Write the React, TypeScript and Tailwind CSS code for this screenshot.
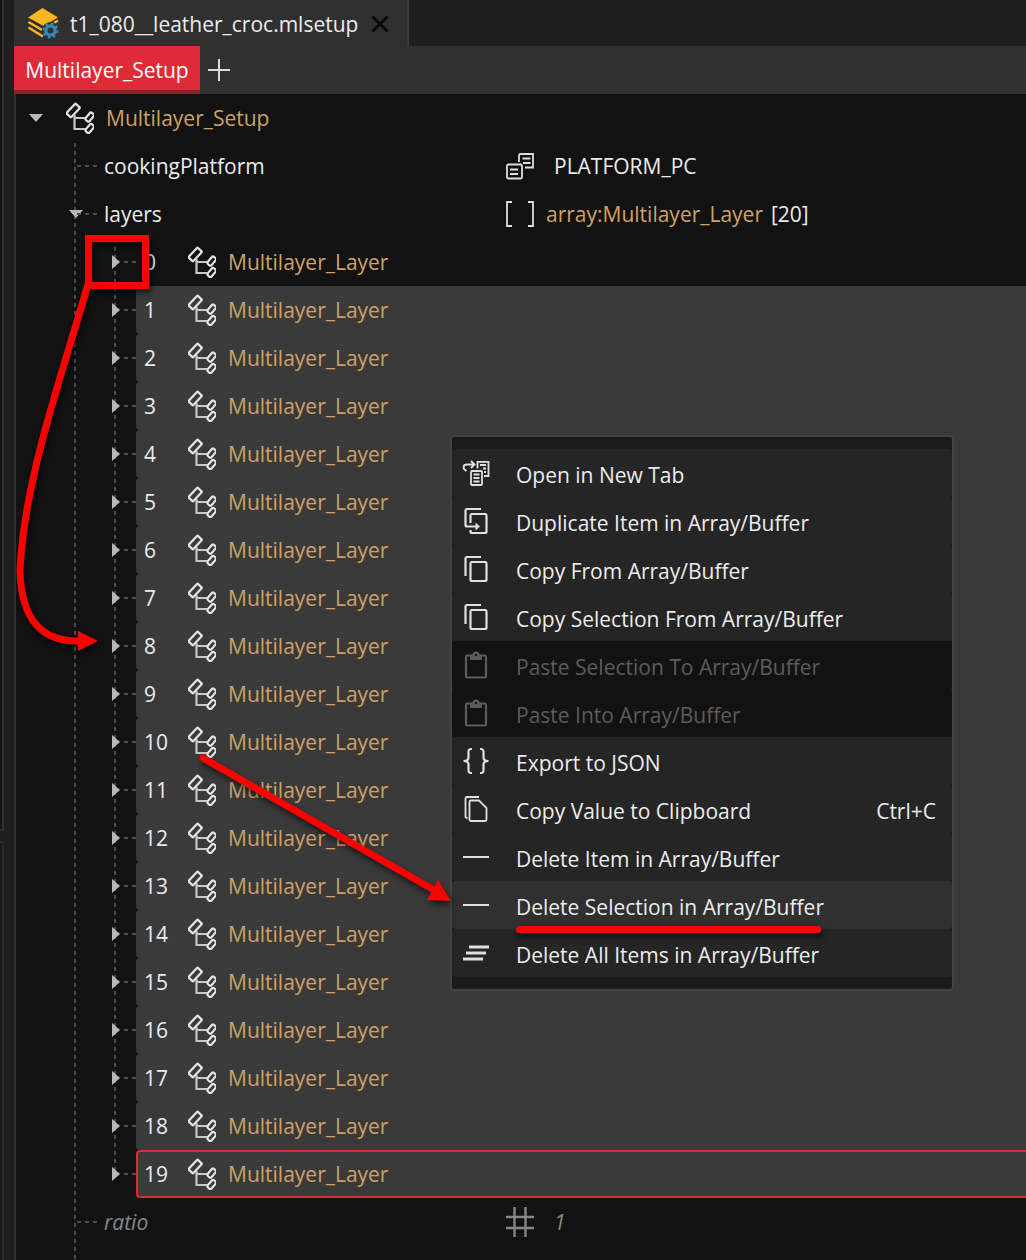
import React from 'react';

type IconProps = { className?: string };

const StructIcon = ({ className = '' }: IconProps) => (
  <svg className={`h-8 w-7 shrink-0 ${className}`} viewBox="0 0 28 32" fill="none" stroke="#e4e4e4" strokeWidth="2.2" aria-hidden="true">
    <rect x="0.5" y="5.3" width="13.4" height="6.4" rx="1" transform="rotate(-47 7.2 8.5)" />
    <path d="M8.5 13V27H19.5M8.5 16H19.5" stroke="#c8c8c8" />
    <rect x="19" y="12.6" width="9.4" height="5" rx="1.8" transform="rotate(-50 23.7 15.1)" />
    <rect x="19" y="24" width="9.4" height="5" rx="1.8" transform="rotate(-50 23.7 26.5)" />
  </svg>
);

const EnumIcon = () => (
  <svg className="h-7 w-7 shrink-0" viewBox="0 0 28 28" fill="none" stroke="#dedede" strokeWidth="1.8" aria-hidden="true">
    <rect x="1" y="12.5" width="15" height="14" rx="1.5" />
    <path d="M4 17.5h8M4 22h8M13 10V3.5a1.5 1.5 0 0 1 1.5-1.5H27v13.5h-8M16.5 6.5h8M17 11h7.5" />
  </svg>
);

const ArrayIcon = () => (
  <svg className="h-7 w-7 shrink-0" viewBox="0 0 28 28" fill="none" stroke="#dedede" strokeWidth="1.8" aria-hidden="true">
    <path d="M6 2H1v24h5M22 2h5v24h-5" />
  </svg>
);

const HashIcon = () => (
  <svg className="h-8 w-7 shrink-0" viewBox="0 0 28 32" fill="none" stroke="#868686" strokeWidth="2.4" aria-hidden="true">
    <path d="M8.5 1v30M19.5 1v30M0 11h28M0 22h28" />
  </svg>
);

const LayersFileIcon = () => (
  <svg className="h-8 w-8 shrink-0" viewBox="0 0 32 32" aria-hidden="true">
    <path d="M15.5 1 31 10.500 16.5 19 1 10.500Z" fill="#fdb71e" />
    <path d="M1.500 15 15 23M1.500 20.500 16 29.500M27 16 31 13.500" stroke="#fdb71e" strokeWidth="2.4" />
    <circle cx="23.500" cy="23.500" r="8.600" fill="#303030" />
    <circle cx="23.500" cy="23.500" r="4.600" fill="none" stroke="#3489b8" strokeWidth="3.200" />
    <circle cx="23.500" cy="23.500" r="6.900" fill="none" stroke="#3489b8" strokeWidth="2.200" strokeDasharray="2.710 2.710" />
  </svg>
);

const menuIcon = (children: React.ReactNode, stroke = '#e0e0e0') => (
  <svg className="size-7 shrink-0" viewBox="0 0 28 28" fill="none" stroke={stroke} strokeWidth="2.2" aria-hidden="true">
    {children}
  </svg>
);

const newTabIcon = menuIcon(
  <g strokeWidth="1.8">
    <path d="M4.5 12C0.500 10 0.500 5.500 5 5.500H12.500M9 2l3.500 3.500L9 9" />
    <path d="M15.500 9.500V2.800h11V17H22M18 6h6M21 9.500h3M22 13h2" />
    <rect x="9" y="12" width="11" height="14" rx="1" />
    <path d="M11.500 15.500h6M11.500 19h6M11.500 22.500h6" />
  </g>,
);
const duplicateIcon = menuIcon(
  <>
    <path d="M19 2H5A1.500 1.500 0 0 0 3.500 3.500V18A1.500 1.500 0 0 0 5 19.500H16" />
    <path d="M13.500 15.500v8l4.500-4Z" fill="#e0e0e0" stroke="none" />
    <path d="M8.500 16V8.500A1.500 1.500 0 0 1 10 7h13A1.500 1.500 0 0 1 24.500 8.500v16a1.500 1.500 0 0 1-1.500 1.500h-13A1.500 1.500 0 0 1 8.500 24.500V23" />
  </>,
);
const copyIcon = menuIcon(
  <>
    <path d="M19 2H5A1.500 1.500 0 0 0 3.500 3.500V21" />
    <rect x="8.500" y="7" width="16" height="19" rx="1.500" />
  </>,
);
const pasteIcon = menuIcon(
  <>
    <rect x="4" y="4.500" width="20" height="22" rx="1.500" />
    <path d="M8 4h2.500a3.500 3.500 0 0 1 7 0H20v5H8Z" fill="#5c5c5c" stroke="none" />
    <circle cx="14" cy="4" r="1.200" fill="#121212" stroke="none" />
  </>,
  '#5c5c5c',
);
const bracesIcon = menuIcon(
  <path d="M10 2H9C6.500 2 6.500 3.500 6.500 5.500v5c0 2.500-1.500 3.500-5 3.500 3.500 0 5 1 5 3.500v5c0 2 0 3.500 2.500 3.500h1M18 2h1c2.500 0 2.500 1.500 2.500 3.500v5c0 2.500 1.500 3.500 5 3.500-3.500 0-5 1-5 3.500v5c0 2 0 3.500-2.500 3.500h-1" />,
);
const clipboardCopyIcon = menuIcon(
  <g strokeWidth="1.8">
    <path d="M17 2H5A1.500 1.500 0 0 0 3.500 3.500V22l2 1.500" />
    <path d="M9 5.500h8L24.500 13v11.500a1.500 1.500 0 0 1-1.500 1.500H9A1.500 1.500 0 0 1 7.500 24.500V7A1.500 1.500 0 0 1 9 5.500Z" />
  </g>,
);
const minusIcon = menuIcon(<path d="M1 14h26" strokeWidth="2" />);
const clearIcon = menuIcon(<path d="M7 8h20M4 14h20M1 20h20" strokeWidth="2.8" />);

type MenuItem = { label: string; icon: React.ReactNode; shortcut?: string; disabled?: boolean; active?: boolean };

const menuItems: MenuItem[] = [
  { label: 'Open in New Tab', icon: newTabIcon },
  { label: 'Duplicate Item in Array/Buffer', icon: duplicateIcon },
  { label: 'Copy From Array/Buffer', icon: copyIcon },
  { label: 'Copy Selection From Array/Buffer', icon: copyIcon },
  { label: 'Paste Selection To Array/Buffer', icon: pasteIcon, disabled: true },
  { label: 'Paste Into Array/Buffer', icon: pasteIcon, disabled: true },
  { label: 'Export to JSON', icon: bracesIcon },
  { label: 'Copy Value to Clipboard', icon: clipboardCopyIcon, shortcut: 'Ctrl+C' },
  { label: 'Delete Item in Array/Buffer', icon: minusIcon },
  { label: 'Delete Selection in Array/Buffer', icon: minusIcon, active: true },
  { label: 'Delete All Items in Array/Buffer', icon: clearIcon },
];

function ContextMenu() {
  return (
    <div role="menu" className="absolute top-[435px] left-[450px] w-[504px] rounded border-2 border-[#434347] bg-[#1b1b1b] py-3 text-[#ececec]">
      {menuItems.map((item) => (
        <button
          key={item.label}
          role="menuitem"
          type="button"
          disabled={item.disabled}
          className={`flex h-12 w-full items-center rounded pr-4 pl-2.5 text-left ${
            item.disabled ? 'bg-[#121212] text-[#5c5c5c]' : item.active ? 'bg-[#303030]' : 'bg-[#252525]'
          }`}
        >
          {item.icon}
          <span className="ml-[26px] pt-1">{item.label}</span>
          {item.shortcut && <span className="ml-auto pt-1">{item.shortcut}</span>}
        </button>
      ))}
    </div>
  );
}

const V_DASH = 'w-0.5 shrink-0 bg-[repeating-linear-gradient(to_bottom,transparent_0_1px,#4c4c4c_1px_5px,transparent_5px_8px)]';
const H_DASH = 'h-0.5 shrink-0 bg-[repeating-linear-gradient(to_right,#4c4c4c_0_4px,transparent_4px_8px)]';

function Toggle({ open, label, className = '' }: { open: boolean; label: string; className?: string }) {
  return (
    <button type="button" aria-label={label} aria-expanded={open} className={`flex size-4 shrink-0 items-center justify-center ${className}`}>
      <svg className="size-4" viewBox="0 0 16 16" fill="#b8b8b8" aria-hidden="true">
        {open ? <path d="M1 4h14L8 12Z" /> : <path d="M4 1v14l8-7Z" />}
      </svg>
    </button>
  );
}

function Property({ name, open, muted, children }: { name: string; open?: boolean; muted?: boolean; children: React.ReactNode }) {
  return (
    <div className={`flex h-12 ${muted ? 'text-[#868686] italic' : ''}`}>
      <div className="flex w-[490px] shrink-0 items-center">
        <span className={`ml-[58px] h-full ${V_DASH}`} />
        {open && <Toggle open label={`Collapse ${name}`} className="-ml-2 -mr-2" />}
        <span className={`ml-px w-5 ${H_DASH}`} />
        <span className="ml-[7px]">{name}</span>
      </div>
      <div className="flex items-center">{children}</div>
    </div>
  );
}

function LayerRow({ index, last }: { index: number; last: boolean }) {
  const selected = index > 0;
  return (
    <div className="flex h-12 items-center">
      <span className={`ml-[58px] h-full ${V_DASH}`} />
      <span className={`ml-[38px] ${last ? 'h-6 self-start' : 'h-full'} ${V_DASH}`} />
      <Toggle open={false} label={`Expand layer ${index}`} className="-ml-2" />
      <span className={`w-3 ${H_DASH}`} />
      <div
        className={`flex h-full flex-1 items-center border-2 pl-1.5 ${
          last ? 'rounded-l border-r-0 border-[#d82936] bg-[#3a3a3a]' : selected ? 'rounded-l border-transparent bg-[#3a3a3a]' : 'border-transparent'
        }`}
      >
        <span className="w-11">{index}</span>
        <StructIcon />
        <span className="ml-3 text-[#d0a263]">Multilayer_Layer</span>
      </div>
    </div>
  );
}

function Annotations() {
  return (
    <svg className="pointer-events-none absolute top-0 left-0 h-[1260px] w-[1026px] drop-shadow-[2px_4px_3px_rgba(0,0,0,0.6)]" viewBox="0 0 1026 1260" fill="none" stroke="#ff0000" strokeWidth="7" aria-hidden="true">
      <rect x="88.5" y="238.5" width="57" height="47" />
      <path d="M88 284C65 366 24 478 20 570C21 620 42 642 80 641" />
      <path d="M78 631 98 641 78 651Z" fill="#ff0000" stroke="none" />
      <path d="M203 758 434 890" strokeLinecap="round" />
      <path d="M438 880 451 901 427 900Z" fill="#ff0000" stroke="none" />
      <path d="M519.5 929.5H818" strokeLinecap="round" />
    </svg>
  );
}

export default function App() {
  return (
    <div className="relative flex min-h-screen overflow-hidden bg-[#1f1f1f] font-['Open_Sans','Noto_Sans',sans-serif] text-[21px] leading-7 whitespace-nowrap text-[#ececec]">
      <aside className="flex w-1 shrink-0 flex-col gap-2.5">
        <div className="h-[831px] border-r-2 border-b-2 border-[#303030] bg-[#151515]" />
        <div className="flex-1 border-t-2 border-r-2 border-[#2a2a2a] bg-[#1b1b1b]" />
      </aside>
      <main className="ml-2.5 flex min-w-0 flex-1 flex-col">
        <header className="flex h-[46px]">
          <div className="flex w-[395px] items-center border-r-2 border-[#3a3a3a] bg-[#303030] pl-[13px]">
            <LayersFileIcon />
            <span className="ml-[11px] pt-0.5">t1_080__leather_croc.mlsetup</span>
            <button type="button" aria-label="Close tab" className="ml-auto mr-[19px] pt-0.5">
              <svg className="size-4" viewBox="0 0 16 16" stroke="#0a0a0a" strokeWidth="3" strokeLinecap="round" aria-hidden="true">
                <path d="M1.500 1.500 14.500 14.500M14.500 1.500 1.500 14.500" />
              </svg>
            </button>
          </div>
        </header>
        <nav className="flex h-12 items-center bg-[#303030]">
          <button type="button" className="h-full w-[186px] border-b-4 border-[#951e2b] bg-[#e02a36] pt-1 text-white">
            Multilayer_Setup
          </button>
          <button type="button" aria-label="Add tab" className="ml-2">
            <svg className="size-[22px]" viewBox="0 0 22 22" stroke="#dcdcdc" strokeWidth="2" aria-hidden="true">
              <path d="M11 0v22M0 11h22" />
            </svg>
          </button>
        </nav>
        <section className="flex-1 border-l-2 border-[#303030] bg-[#121212]">
          <div className="flex h-12 items-center">
            <Toggle open label="Collapse Multilayer_Setup" className="ml-3" />
            <StructIcon className="ml-[22px]" />
            <span className="ml-3 text-[#d0a263]">Multilayer_Setup</span>
          </div>
          <Property name="cookingPlatform">
            <EnumIcon />
            <span className="ml-5">PLATFORM_PC</span>
          </Property>
          <Property name="layers" open>
            <ArrayIcon />
            <span className="ml-3 text-[#d0a263]">array:Multilayer_Layer</span>
            <span className="ml-2">[20]</span>
          </Property>
          {Array.from({ length: 20 }, (_, i) => (
            <LayerRow key={i} index={i} last={i === 19} />
          ))}
          <Property name="ratio" muted>
            <HashIcon />
            <span className="ml-5">1</span>
          </Property>
          <div className="flex h-3.5">
            <span className={`ml-[58px] ${V_DASH}`} />
          </div>
        </section>
      </main>
      <ContextMenu />
      <Annotations />
    </div>
  );
}
